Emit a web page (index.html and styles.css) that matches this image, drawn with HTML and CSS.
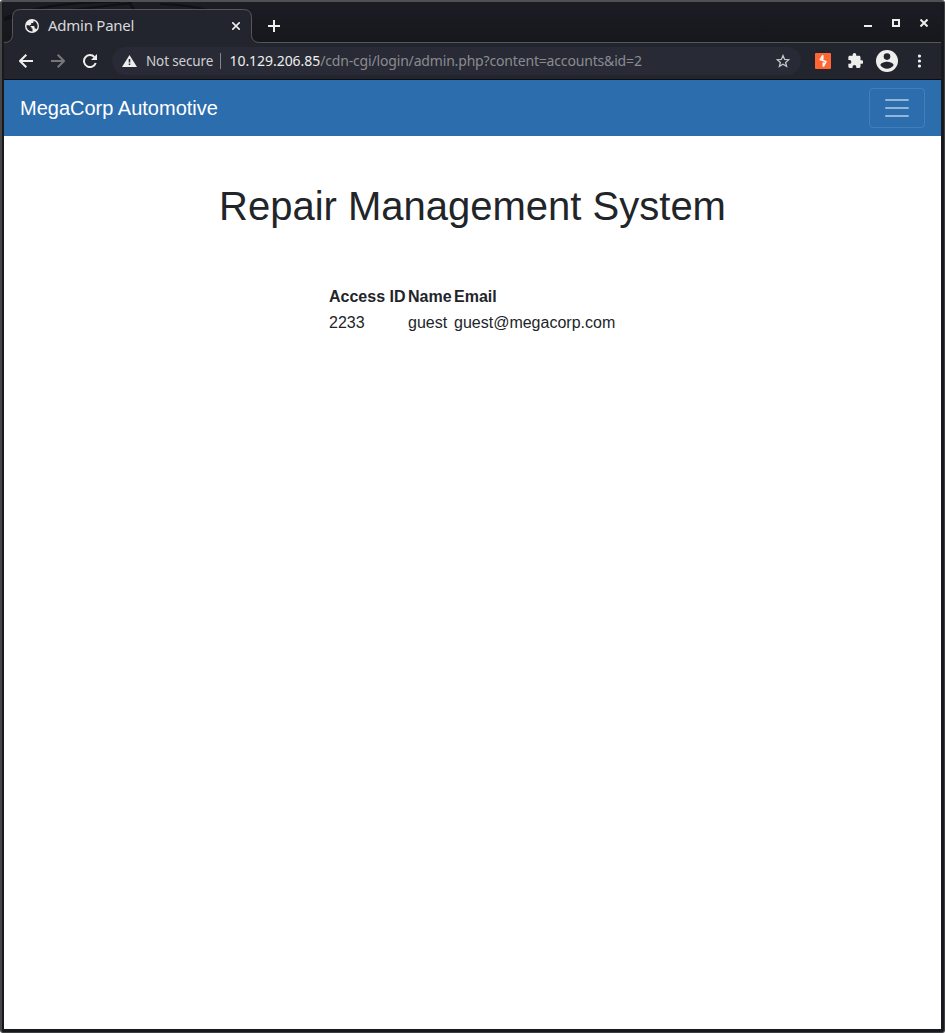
FILE: index.html
```html
<!DOCTYPE html>
<html lang="en">
<head>
<meta charset="utf-8">
<title>Admin Panel</title>
<link rel="stylesheet" href="styles.css">
</head>
<body>
<div class="window">
  <header class="titlebar">
    <svg class="tab-outline" width="937" height="41" viewBox="4 2 937 41">
      <g fill="none" stroke="#101114" stroke-width="2"><path d="M4 18Q50 1 120 2M4 20Q20 16 32 12M70 10L132 3M128 2l6 7M160 4q30 1 47 6"/></g>
      <path d="M4 43v-.5q8.500 0 8.500-8V17.500q0-8 8-8h223q8 0 8 8v17q0 8 8 8H941v.5z" fill="#23252e"/>
      <path d="M4 42.500q8.500 0 8.500-8V17.500q0-8 8-8h223q8 0 8 8v17q0 8 8 8H941" fill="none" stroke="#55575b"/>
    </svg>
    <div class="tab">
      <svg class="globe" width="14" height="14" viewBox="0 0 14 14"><circle cx="7" cy="7" r="7" fill="#eeeeec"/><path d="M1.500 6.200H4L6.500 8.200V9.400H7.500V12.600A5.600 5.600 0 0 1 1.500 6.200zM8.600 1.700V3.200L7.800 4H6.200V5.500L4.900 6.200V7H8.800L9.600 7.800V9.400H10.600L11.600 10.200A5.600 5.600 0 0 0 8.600 1.700z" fill="#23252e"/></svg>
      <span class="tab-title">Admin Panel</span>
      <svg class="tab-close" width="8" height="8" viewBox="0 0 8 8"><path d="M.2.200l7.600 7.600M7.800.200L.2 7.800" stroke="#eeeeec" stroke-width="1.600"/></svg>
    </div>
    <svg class="new-tab" width="12" height="12" viewBox="0 0 12 12"><path d="M6 0v12M0 6h12" stroke="#eeeeec" stroke-width="2"/></svg>
    <div class="controls">
      <svg width="8" height="8" viewBox="0 0 8 8"><path d="M0 7h8" stroke="#eeeeec" stroke-width="2"/></svg>
      <svg width="8" height="8" viewBox="0 0 8 8"><path d="M1 1h6v6H1z" fill="none" stroke="#eeeeec" stroke-width="2"/></svg>
      <svg width="8" height="8" viewBox="0 0 8 8"><path d="M.5.500l7 7M7.500.500l-7 7" stroke="#eeeeec" stroke-width="2"/></svg>
    </div>
  </header>
  <div class="toolbar">
    <nav class="nav-buttons">
      <svg width="14" height="14" viewBox="0 0 14 14"><path d="M14 7H1.500M7.300.700L1 7l6.300 6.300" fill="none" stroke="#eeeeec" stroke-width="2"/></svg>
      <svg width="14" height="14" viewBox="0 0 14 14"><path d="M0 7h12.500M6.700.700L13 7l-6.300 6.300" fill="none" stroke="#76777a" stroke-width="2"/></svg>
      <svg width="14" height="14" viewBox="0 0 14 14"><path d="M11.400 3A6 6 0 1 0 12.700 9" fill="none" stroke="#eeeeec" stroke-width="2"/><path d="M14 0v6H8z" fill="#eeeeec"/></svg>
    </nav>
    <div class="omnibox">
      <svg class="warning" width="15" height="12" viewBox="0 0 15 12"><path d="M7.500 0L15 12H0z" fill="#eeeeec"/><path d="M7.500 4v3.500M7.500 8.500v1.500" stroke="#282a35" stroke-width="1.600"/></svg>
      <span class="security">Not secure</span>
      <span class="divider"></span>
      <span class="host">10.129.206.85</span><span class="path">/cdn-cgi/login/admin.php?content=accounts&amp;id=2</span>
      <svg class="star" width="14" height="14" viewBox="0 0 14 14"><path d="M7 1.600l1.600 3.800 4.100.300-3.100 2.700 1 4L7 10.200l-3.600 2.200 1-4-3.100-2.700 4.100-.3z" fill="none" stroke="#c3c4c6" stroke-width="1.300"/></svg>
    </div>
    <div class="extensions">
      <svg class="burp" width="16" height="16" viewBox="0 0 16 16"><rect width="16" height="16" rx="1" fill="#ff6633"/><path d="M7.800 2.300L5.300 6.500L10.900 8.600L8.300 13.600M7.800 2.300V6.500M8.300 13.600V9.500" fill="none" stroke="#fff" stroke-width="1.500"/></svg>
      <svg class="puzzle" width="15" height="15" viewBox="1.500 1 21 21"><path d="M20.500 11H19V7c0-1.100-.9-2-2-2h-4V3.500a2.500 2.500 0 0 0-5 0V5H4c-1.100 0-2 .9-2 2v3.800h1.500a2.700 2.700 0 0 1 0 5.400H2V20c0 1.100.9 2 2 2h3.800v-1.500a2.700 2.700 0 0 1 5.400 0V22H17c1.100 0 2-.9 2-2v-4h1.500a2.500 2.500 0 0 0 0-5z" fill="#eeeeec"/></svg>
      <svg class="avatar" width="22" height="22" viewBox="0 0 22 22"><circle cx="11" cy="11" r="11" fill="#eeeeec"/><circle cx="11" cy="6.600" r="3.300" fill="#23252e"/><path d="M4.400 15.200c0-2.200 4.400-3.400 6.600-3.400s6.600 1.200 6.600 3.400a8 8 0 0 1-13.200 0z" fill="#23252e"/></svg>
      <svg class="menu" width="4" height="14" viewBox="0 0 4 14"><g fill="#eeeeec"><circle cx="1.500" cy="2" r="1.600"/><circle cx="1.500" cy="7" r="1.600"/><circle cx="1.500" cy="12" r="1.600"/></g></svg>
    </div>
  </div>
  <main class="page">
    <nav class="navbar">
      <span class="brand">MegaCorp Automotive</span>
      <button class="toggler" aria-label="Toggle navigation"><svg width="30" height="30" viewBox="0 0 30 30"><path d="M4 7h22M4 15h22M4 23h22" stroke="#fff" stroke-opacity=".5" stroke-width="2" stroke-linecap="round" stroke-miterlimit="10"/></svg></button>
    </nav>
    <h1 class="heading">Repair Management System</h1>
    <table class="accounts">
      <tr><th class="access-id">Access ID</th><th class="name">Name</th><th>Email</th></tr>
      <tr><td>2233</td><td>guest</td><td>guest@megacorp.com</td></tr>
    </table>
  </main>
</div>
</body>
</html>
```
FILE: styles.css
```css
* { box-sizing: border-box; }
html { background: #fff; }
body { margin: 0; font-family: "Liberation Sans", Arial, sans-serif; color: #212529; }
svg { display: block; flex: none; }
.window {
  width: 945px; height: 1033px; overflow: hidden;
  display: flex; flex-direction: column;
  border-style: solid; border-width: 2px 1px 1px 2px;
  border-color: #4e5051 #3d3f40 #3d3f40 #444645;
  border-radius: 3px;
  background: #17191e;
  padding: 0 3px 3px 2px;
}
.titlebar {
  position: relative; height: 41px; flex: none;
  display: flex; align-items: flex-start;
  background: linear-gradient(#1b1d25, #16171b);
}
.tab-outline { position: absolute; left: 0; top: 0; }
.tab {
  position: relative; width: 240px; height: 33px; margin: 7px 0 0 8px; padding: 0 12px 0 13px;
  display: flex; align-items: center;
}
.tab-title {
  flex: 1; margin: 0 0 2px 9px; font: 15px/20px "Noto Sans", sans-serif; letter-spacing: -.26px;
  color: #d8d9da; white-space: nowrap;
}
.new-tab { margin: 18px 0 0 16px; position: relative; }
.controls { position: relative; display: flex; gap: 20px; margin: 17px 13px 0 auto; }
.toolbar {
  height: 37px; flex: none; display: flex; align-items: center;
  background: #23252e; border-bottom: 1px solid #0c0d10; padding-left: 15px;
}
.nav-buttons { display: flex; gap: 18px; width: 93px; }
.omnibox {
  width: 689px; height: 28px; border-radius: 14px; background: #282a35;
  display: flex; align-items: center; padding: 0 11px 0 10px;
  font: 14px/20px "Noto Sans", sans-serif; white-space: nowrap;
}
.security { margin-left: 9px; width: 74px; color: #cfd0d2; font-size: 13.500px; letter-spacing: -.15px; }
.divider { width: 1px; height: 16px; background: #85868b; margin-right: 8.500px; }
.host { color: #eeeeec; letter-spacing: -.05px; }
.path { color: #8b8c92; letter-spacing: -.17px; }
.star { margin-left: auto; }
.extensions { display: flex; align-items: center; margin-left: 14px; }
.puzzle { margin: 0 0 1px 17px; }
.avatar { margin-left: 13px; }
.menu { margin-left: 20px; }
.page { flex: 1; background: #fff; }
.navbar {
  height: 56px; padding: 8px 16px; background: #2c6dae;
  display: flex; align-items: center; justify-content: space-between;
}
.brand { font-size: 20px; line-height: 30px; color: #fff; }
.toggler {
  width: 56px; height: 40px; padding: 4px 12px; background: transparent;
  border: 1px solid rgba(255, 255, 255, .12); border-radius: 4px;
}
.heading { margin: 46px 0 0; text-align: center; font-size: 40px; line-height: 48px; font-weight: 400; }
.accounts { margin: 53px 0 0 323px; border-spacing: 2px; font-size: 16px; line-height: 24px; }
.accounts th, .accounts td { padding: 0; text-align: left; }
.accounts .access-id { width: 77px; }
.accounts .name { width: 44px; }
```
